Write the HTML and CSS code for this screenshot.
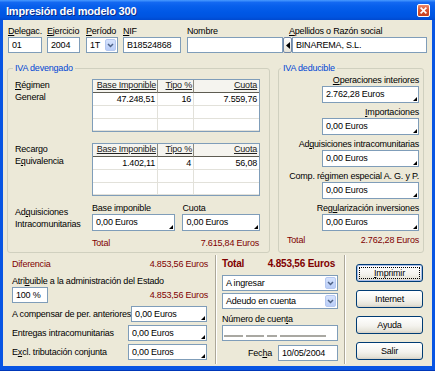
FILE: index.html
```html
<!DOCTYPE html>
<html lang="es">
<head>
<meta charset="utf-8">
<title>Impresión del modelo 300</title>
<link rel="stylesheet" href="styles.css">
</head>
<body>
<div class="window">
  <div class="titlebar">
    <span class="title">Impresión del modelo 300</span>
    <span class="close"><svg width="7" height="7" viewBox="0 0 7 7"><path d="M0.6 0.6 L6.4 6.4 M6.4 0.6 L0.6 6.4" stroke="#fff" stroke-width="1.6" fill="none"/></svg></span>
  </div>
  <div class="body">
    <div class="top-row">
      <div class="field"><div class="lbl"><u>D</u>elegac.</div><div class="input w-deleg">01</div></div>
      <div class="field"><div class="lbl"><u>E</u>jercicio</div><div class="input w-ejer">2004</div></div>
      <div class="field"><div class="lbl"><u>P</u>eríodo</div>
        <div class="combo w-per"><span class="combo-text">1T</span><span class="combo-btn"><svg width="7" height="5" viewBox="0 0 7 5"><polyline points="1,1 3.5,3.5 6,1" fill="none" stroke="#4D6185" stroke-width="1.5"/></svg></span></div>
      </div>
      <div class="field"><div class="lbl"><u>N</u>IF</div><div class="input w-nif">B18524868</div></div>
      <div class="field"><div class="lbl">Nombre</div>
        <div class="nombre-row"><div class="input w-nombre"></div><div class="arrow-btn"><svg width="4" height="7" viewBox="0 0 4 7"><polygon points="4,0 0,3.5 4,7" fill="#000"/></svg></div></div>
      </div>
      <div class="field"><div class="lbl lbl-ape"><u>A</u>pellidos o Razón social</div><div class="input w-ape">BINAREMA, S.L.</div></div>
    </div>

    <div class="groups">
      <fieldset class="group group-dev">
        <legend>IVA devengado</legend>
        <div class="row">
          <div class="side-lbl"><u>R</u>égimen<br>General</div>
          <div class="table">
            <div class="th"><span>Base Imponible</span></div><div class="th"><span>Tipo %</span></div><div class="th last"><span>Cuota</span></div>
            <div class="td">47.248,51</div><div class="td">16</div><div class="td last">7.559,76</div>
            <div class="td"></div><div class="td"></div><div class="td last"></div>
            <div class="td"></div><div class="td"></div><div class="td last"></div>
          </div>
        </div>
        <div class="row row2">
          <div class="side-lbl">Recargo<br>E<u>q</u>uivalencia</div>
          <div class="table">
            <div class="th"><span>Base Imponible</span></div><div class="th"><span>Tipo %</span></div><div class="th last"><span>Cuota</span></div>
            <div class="td">1.402,11</div><div class="td">4</div><div class="td last">56,08</div>
            <div class="td"></div><div class="td"></div><div class="td last"></div>
            <div class="td"></div><div class="td"></div><div class="td last"></div>
          </div>
        </div>
        <div class="row row3">
          <div class="side-lbl side-adq">Ad<u>q</u>uisiciones<br>Intracomunitarias</div>
          <div class="sub sub-base"><div class="lbl">Base imponible</div><div class="input tall tri">0,00 Euros</div></div>
          <div class="sub sub-cuota"><div class="lbl">Cuota</div><div class="input tall tri">0,00 Euros</div></div>
        </div>
        <div class="total-row dev-total"><span>Total</span><span>7.615,84 Euros</span></div>
      </fieldset>

      <fieldset class="group group-ded">
        <legend>IVA deducible</legend>
        <div class="ded-item"><div class="lbl"><u>O</u>peraciones interiores</div><div class="input tall tri">2.762,28 Euros</div></div>
        <div class="ded-item"><div class="lbl"><u>I</u>mportaciones</div><div class="input tall tri">0,00 Euros</div></div>
        <div class="ded-item"><div class="lbl">Ad<u>q</u>uisiciones intracomunitarias</div><div class="input tall tri">0,00 Euros</div></div>
        <div class="ded-item"><div class="lbl">Comp. régimen especial A. G. y P.</div><div class="input tall tri">0,00 Euros</div></div>
        <div class="ded-item"><div class="lbl">Reg<u>u</u>larización inversiones</div><div class="input tall tri">0,00 Euros</div></div>
        <div class="total-row ded-total"><span>Total</span><span>2.762,28 Euros</span></div>
      </fieldset>
    </div>

    <div class="bottom">
      <div class="panel-left">
        <div class="line red"><span>Diferencia</span><span>4.853,56 Euros</span></div>
        <div class="attr-lbl">Atri<u>b</u>uible a la administración del Estado</div>
        <div class="pct-row"><div class="input pct">100 %</div><span class="red">4.853,56 Euros</span></div>
        <div class="form-row"><span>A compensar de per. anteriores</span><div class="input tri">0,00 Euros</div></div>
        <div class="form-row"><span>Entregas intracomunitarias</span><div class="input tri">0,00 Euros</div></div>
        <div class="form-row"><span>E<u>x</u>cl. tributación conjunta</span><div class="input tri">0,00 Euros</div></div>
      </div>
      <div class="vsep"></div>
      <div class="panel-mid">
        <div class="line total-bold"><span>Total</span><span>4.853,56 Euros</span></div>
        <div class="combo wide first"><span class="combo-text">A ingresar</span><span class="combo-btn"><svg width="7" height="5" viewBox="0 0 7 5"><polyline points="1,1 3.5,3.5 6,1" fill="none" stroke="#4D6185" stroke-width="1.5"/></svg></span></div>
        <div class="combo wide second"><span class="combo-text">Adeudo en cuenta</span><span class="combo-btn"><svg width="7" height="5" viewBox="0 0 7 5"><polyline points="1,1 3.5,3.5 6,1" fill="none" stroke="#4D6185" stroke-width="1.5"/></svg></span></div>
        <div class="num-lbl">Número de cuen<u>t</u>a</div>
        <div class="input cuenta"><span class="dash d1"></span><span class="dash d2"></span><span class="dash d3"></span><span class="dash d4"></span></div>
        <div class="fecha-row"><span>Fec<u>h</u>a</span><div class="input fecha">10/05/2004</div></div>
      </div>
      <div class="vsep"></div>
      <div class="panel-right">
        <div class="btn btn-default"><span><u>I</u>mprimir</span></div>
        <div class="btn"><span>Internet</span></div>
        <div class="btn"><span>Ayuda</span></div>
        <div class="btn"><span>Salir</span></div>
      </div>
    </div>
  </div>
</div>
</body>
</html>
```

FILE: styles.css
```css
* { box-sizing: border-box; margin: 0; padding: 0; }
html, body { width: 435px; height: 371px; overflow: hidden; background: #ffffff; }
body {
  font-family: "Liberation Sans", Arial, sans-serif;
  font-size: 9px;
  letter-spacing: -0.2px;
  color: #000;
}
u { text-decoration: underline; }

.window {
  width: 435px;
  height: 371px;
  display: flex;
  flex-direction: column;
  background: #0855E3;
  padding: 0 3px 4px 3px;
  border-bottom: 1px solid #0037B8;
}

.titlebar {
  height: 20px;
  margin: 0 -3px;
  padding: 0 5px 0 6px;
  display: flex;
  align-items: center;
  justify-content: space-between;
  background: linear-gradient(to bottom, #4A9BFF 0%, #1469F2 12%, #0860EC 30%, #0058E6 60%, #0054E0 85%, #0049CF 100%);
  flex: none;
}
.title {
  color: #fff;
  font-weight: bold;
  font-size: 11px;
  letter-spacing: -0.2px;
  text-shadow: 1px 1px #0B2A86;
  padding-top: 1px;
}
.close {
  width: 13px;
  height: 13px;
  border: 1px solid #fff;
  border-radius: 2px;
  background: linear-gradient(to bottom, #EE8A6C, #DA5431 45%, #C6401E);
  display: flex;
  align-items: center;
  justify-content: center;
}

.body {
  flex: 1;
  background: #ECE9D8;
  padding: 6px 8px 0 4px;
  display: flex;
  flex-direction: column;
}

/* top row */
.top-row {
  display: grid;
  grid-template-columns: 39px 39px 37px 64px 105px 135px;
  padding-left: 1px;
}
.lbl { line-height: 11px; height: 11px; white-space: nowrap; }
.lbl-ape { margin-left: -3px; }

.input {
  height: 16px;
  border: 1px solid #7F9DB9;
  background: #fff;
  padding: 0 3px;
  line-height: 14px;
  white-space: nowrap;
  overflow: hidden;
  position: relative;
}
.input.tall { height: 17px; line-height: 15px; }
.tri::after {
  content: "";
  position: absolute;
  right: 1px;
  bottom: 1px;
  border-left: 4px solid transparent;
  border-bottom: 4px solid #000;
}
.w-deleg { width: 34px; }
.w-ejer { width: 33px; }
.w-nif { width: 58px; }
.w-nombre { width: 96px; }
.w-ape { width: 135px; }

.nombre-row { display: flex; }
.arrow-btn {
  width: 9px;
  height: 16px;
  border: 1px solid #6F86A8;
  border-radius: 2px;
  background: linear-gradient(to bottom, #ffffff, #E6E3D8);
  display: flex;
  align-items: center;
  justify-content: center;
}

.combo {
  display: flex;
  align-items: center;
  justify-content: space-between;
  height: 16px;
  border: 1px solid #7F9DB9;
  background: #fff;
  padding: 1px;
}
.combo-text { padding-left: 2px; line-height: 12px; white-space: nowrap; }
.combo-btn {
  width: 11px;
  height: 12px;
  border-radius: 2px;
  background: linear-gradient(to bottom, #D6E3FD, #B9CDF8);
  border: 1px solid #B5C8F0;
  display: flex;
  align-items: center;
  justify-content: center;
}
.w-per { width: 32px; }

/* groups */
.groups { display: flex; gap: 8px; margin-top: 10px; }
.group {
  border: 1px solid #D0D0BF;
  border-radius: 3px;
  height: 190px;
  min-width: 0;
}
legend {
  color: #0046D5;
  line-height: 11px;
  padding: 0 2px;
  margin-left: -2px;
}
.group-dev { width: 263px; padding: 5px 9px 0 7px; }
.group-ded { width: 146px; padding: 0 4px; }

.row { display: flex; }
.row2 { margin-top: 11px; }
.row3 { margin-top: 7px; }
.side-lbl { width: 77px; line-height: 12px; flex: none; white-space: nowrap; }
.side-adq { padding-top: 3px; }

.table {
  width: 168px;
  height: 53px;
  border: 1px solid #7F9DB9;
  background: #fff;
  display: grid;
  grid-template-columns: 65px 36px 1fr;
  grid-template-rows: 13px 13px 13px 12px;
}
.th {
  background: #F5F4EF;
  border-right: 1px solid #8D8B80;
  border-bottom: 1px solid #5E5C52;
  text-align: right;
  padding-right: 1px;
  line-height: 11px;
  color: #222;
  white-space: nowrap;
}
.th span { text-decoration: underline; }
.th.last { border-right: none; padding-right: 2px; }
.td {
  border-right: 1px solid #E2E1DA;
  border-bottom: 1px solid #E2E1DA;
  text-align: right;
  padding-right: 2px;
  line-height: 12px;
}
.td.last { border-right: none; }

.sub { display: flex; flex-direction: column; }
.sub-base { width: 84px; margin-right: 7px; }
.sub-cuota { width: 78px; }

.total-row {
  display: flex;
  justify-content: space-between;
  color: #800000;
  line-height: 12px;
  margin-top: 6px;
}
.dev-total { padding-left: 77px; padding-right: 1px; }

.ded-item {
  display: flex;
  flex-direction: column;
  align-items: flex-end;
  margin-bottom: 3px;
}
.ded-item .lbl { line-height: 12px; height: 12px; }
.ded-item .input { width: 97px; }
.ded-total { padding-left: 4px; margin-top: 3px; }

/* bottom */
.bottom { flex: 1; display: flex; }
.panel-left { width: 208px; padding: 5px 7px 0 5px; }
.vsep {
  width: 2px;
  border-left: 1px solid #ACA899;
  border-right: 1px solid #fff;
  margin: 2px 0 2px;
}
.panel-mid { width: 127px; padding: 5px 6px 0 5px; }
.panel-right {
  padding: 11px 0 0 10px;
  display: flex;
  flex-direction: column;
  gap: 8px;
}

.line {
  display: flex;
  justify-content: space-between;
  align-items: center;
  line-height: 12px;
  white-space: nowrap;
}
.red { color: #800000; }
.attr-lbl { margin-top: 5px; line-height: 12px; white-space: nowrap; }
.pct-row { display: flex; justify-content: space-between; align-items: center; }
.pct { width: 36px; }
.form-row {
  display: flex;
  justify-content: space-between;
  align-items: center;
  margin-top: 3px;
  padding-right: 1px;
  white-space: nowrap;
}
.form-row .input { width: 79px; }

.total-bold {
  font-weight: bold;
  font-size: 10px;
  color: #800000;
  padding-right: 3px;
}
.combo.wide { width: 116px; }
.combo.first { margin-top: 5px; }
.combo.second { margin-top: 2px; }
.num-lbl { margin-top: 4px; line-height: 12px; }
.cuenta {
  width: 116px;
  display: flex;
  align-items: flex-end;
  gap: 3px;
  padding: 0 0 3px 1px;
}
.dash { height: 2px; background: #A9A8A2; }
.d1 { width: 19px; }
.d2 { width: 18px; }
.d3 { width: 10px; }
.d4 { width: 46px; }
.fecha-row {
  display: flex;
  justify-content: flex-end;
  align-items: center;
  gap: 6px;
  margin-top: 4px;
}
.fecha { width: 60px; }

.btn {
  width: 67px;
  height: 18px;
  border: 1px solid #003C74;
  border-radius: 3px;
  background: linear-gradient(to bottom, #FFFFFF, #F4F3EE 55%, #E6E4DA 85%, #D6D0C5);
  display: flex;
  align-items: center;
  justify-content: center;
  line-height: 12px;
}
.btn-default {
  box-shadow: inset 0 0 0 1px #A9BDEA;
  outline: 1px dotted #000;
  outline-offset: -4px;
}
```
